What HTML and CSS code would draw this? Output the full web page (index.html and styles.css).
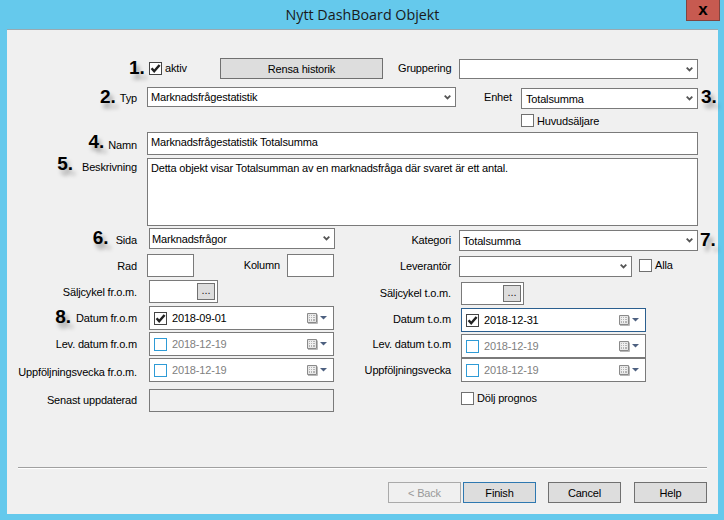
FILE: index.html
```html
<!DOCTYPE html>
<html lang="sv">
<head>
<meta charset="utf-8">
<title>Nytt DashBoard Objekt</title>
<link rel="stylesheet" href="styles.css">
</head>
<body>
<svg class="defs" width="0" height="0" aria-hidden="true">
  <symbol id="chev" viewBox="0 0 7 5"><path d="M.7.7 3.5 3.5 6.3.7" fill="none" stroke="#555" stroke-width="1.8"/></symbol>
  <symbol id="check" viewBox="0 0 11 11"><path d="M1.6 5.2 4.2 8.2 9.6 2" fill="none" stroke="#222" stroke-width="2.5"/></symbol>
  <symbol id="cal" viewBox="0 0 20 11">
    <path d="M.5.5h9v9h-9z" fill="#e6e6e6" stroke="#8a8a8a"/>
    <path d="M1 10.500h9.500v-9" fill="none" stroke="#b8b8b8"/>
    <path d="M2 2h6v6H2z" fill="#b4b4b4"/>
    <path d="M2 3.500h6M2 5.500h6M3.500 2v6M5.500 2v6" stroke="#f0f0f0"/>
    <path d="M13 3h7l-3.500 3.500z" fill="#4d6080"/>
  </symbol>
</svg>
<div class="window">
  <header class="titlebar">
    <h1 class="title">Nytt DashBoard Objekt</h1>
    <button class="close" type="button">x</button>
  </header>
  <main class="client">
    <div class="row r1">
      <div class="num n1">1.</div>
      <span class="cb on"><svg><use href="#check"/></svg></span>
      <span class="lbl aktiv">aktiv</span>
      <button class="btn rensa" type="button">Rensa historik</button>
      <span class="lbl grupp">Gruppering</span>
      <div class="sel grsel"><svg class="chev"><use href="#chev"/></svg></div>
    </div>
    <div class="row r2">
      <div class="lblcell w-typ"><span class="num">2.</span><span class="lbl typ">Typ</span></div>
      <div class="sel typsel"><span>Marknadsfrågestatistik</span><svg class="chev"><use href="#chev"/></svg></div>
      <span class="lbl enhet">Enhet</span>
      <div class="sel ensel"><span>Totalsumma</span><svg class="chev"><use href="#chev"/></svg></div>
      <span class="num n3">3.</span>
    </div>
    <div class="row r3">
      <span class="cb"></span><span class="lbl huvud">Huvudsäljare</span>
    </div>
    <div class="row r4">
      <div class="lblcell w-namn"><span class="num">4.</span><span class="lbl namn">Namn</span></div>
      <div class="txt namnbox">Marknadsfrågestatistik Totalsumma</div>
    </div>
    <div class="row r5">
      <div class="lblcell w-besk"><span class="num">5.</span><span class="lbl besk">Beskrivning</span></div>
      <div class="txt area">Detta objekt visar Totalsumman av en marknadsfråga där svaret är ett antal.</div>
    </div>
    <div class="cols">
      <section class="col left">
        <div class="row l-sida">
          <div class="lblcell lc"><span class="num">6.</span><span class="lbl sida">Sida</span></div>
          <div class="sel sidasel"><span>Marknadsfrågor</span><svg class="chev"><use href="#chev"/></svg></div>
        </div>
        <div class="row l-rad">
          <div class="lblcell lc2"><span class="lbl">Rad</span></div>
          <div class="box small"></div>
          <span class="lbl kol">Kolumn</span>
          <div class="box small"></div>
        </div>
        <div class="row l-salj">
          <div class="lblcell lc"><span class="lbl">Säljcykel fr.o.m.</span></div>
          <div class="box pick lp"><button class="dots" type="button">...</button></div>
        </div>
        <div class="row l-dat">
          <div class="lblcell lc"><span class="num">8.</span><span class="lbl dl">Datum fr.o.m</span></div>
          <div class="date"><span class="cb on"><svg><use href="#check"/></svg></span><span class="dv">2018-09-01</span><svg class="cal"><use href="#cal"/></svg></div>
        </div>
        <div class="row l-lev">
          <div class="lblcell lc"><span class="lbl">Lev. datum fr.o.m</span></div>
          <div class="date off"><span class="cb"></span><span class="dv">2018-12-19</span><svg class="cal"><use href="#cal"/></svg></div>
        </div>
        <div class="row l-upp">
          <div class="lblcell lc"><span class="lbl">Uppföljningsvecka fr.o.m.</span></div>
          <div class="date off"><span class="cb"></span><span class="dv">2018-12-19</span><svg class="cal"><use href="#cal"/></svg></div>
        </div>
        <div class="row l-sen">
          <div class="lblcell lc"><span class="lbl">Senast uppdaterad</span></div>
          <div class="box senast"></div>
        </div>
      </section>
      <section class="col right">
        <div class="row h-kat">
          <div class="lblcell rc"><span class="lbl">Kategori</span></div>
          <div class="sel katsel"><span>Totalsumma</span><svg class="chev"><use href="#chev"/></svg></div>
          <span class="num n7">7.</span>
        </div>
        <div class="row h-lev">
          <div class="lblcell rc"><span class="lbl">Leverantör</span></div>
          <div class="sel levsel"><svg class="chev"><use href="#chev"/></svg></div>
          <span class="cb alla"></span><span class="lbl allat">Alla</span>
        </div>
        <div class="row h-salj">
          <div class="lblcell rd"><span class="lbl">Säljcykel t.o.m.</span></div>
          <div class="box pick rp"><button class="dots" type="button">...</button></div>
        </div>
        <div class="row h-dat">
          <div class="lblcell rd"><span class="lbl">Datum t.o.m</span></div>
          <div class="date focus"><span class="cb on"><svg><use href="#check"/></svg></span><span class="dv">2018-12-31</span><svg class="cal"><use href="#cal"/></svg></div>
        </div>
        <div class="row h-lv">
          <div class="lblcell rd"><span class="lbl lv-l">Lev. datum t.o.m</span></div>
          <div class="date off"><span class="cb"></span><span class="dv">2018-12-19</span><svg class="cal"><use href="#cal"/></svg></div>
        </div>
        <div class="row h-up">
          <div class="lblcell rd"><span class="lbl up-l">Uppföljningsvecka</span></div>
          <div class="date off"><span class="cb"></span><span class="dv">2018-12-19</span><svg class="cal"><use href="#cal"/></svg></div>
        </div>
        <div class="row h-dolj">
          <span class="cb"></span><span class="lbl doljt">Dölj prognos</span>
        </div>
      </section>
    </div>
    <hr class="sep">
    <footer class="actions">
      <button class="btn wiz disabled" type="button">&lt; Back</button>
      <button class="btn wiz finish" type="button">Finish</button>
      <button class="btn wiz cancel" type="button">Cancel</button>
      <button class="btn wiz help" type="button">Help</button>
    </footer>
  </main>
</div>
</body>
</html>
```

FILE: styles.css
```css
* { box-sizing: border-box; }
html, body { margin: 0; padding: 0; }
body { width: 724px; height: 520px; overflow: hidden; font-family: "Liberation Sans", Arial, sans-serif; font-size: 11px; letter-spacing: -0.17px; color: #000; }
.defs { position: absolute; }
.window { width: 724px; height: 520px; background: #65c9ec; display: flex; flex-direction: column; padding: 0 6px 6px 7px; }
.titlebar { height: 29px; flex: none; display: flex; justify-content: center; position: relative; }
.title { margin: 0; font: 400 14.3px/30px "Open Sans", sans-serif; letter-spacing: 0; color: #1a1a1a; }
.close { position: absolute; right: -2px; top: 0; width: 34px; height: 21px; background: #c75a50; border: 1px solid #7f4540; border-top: 0; font: 700 17px/15px "Liberation Sans", sans-serif; color: #000; padding: 0 0 2px; }
.client { flex: 1; background: #f0f0f0; border-top: 1px solid #9aa9b0; padding: 28px 0 11px; display: flex; flex-direction: column; }
.row { display: flex; align-items: flex-start; }
.lbl { white-space: nowrap; line-height: 13px; }
.num { font: 700 19px/20px "Liberation Sans", sans-serif; letter-spacing: 0; color: #000; text-shadow: 3px 5px 4px rgba(0,0,0,.35); white-space: nowrap; }
.lblcell { display: flex; justify-content: flex-end; align-items: flex-start; flex: none; white-space: nowrap; }

.sel, .txt, .box, .date { background: #fff; border: 1px solid #7a7a7a; flex: none; }
.sel { display: flex; align-items: center; height: 21px; padding: 0 4px 0 3px; }
.chev { width: 7px; height: 5px; flex: none; margin-left: auto; }
.cb { width: 13px; height: 13px; border: 1px solid #707070; background: #fff; flex: none; display: block; }
.cb.on { border-color: #444; }
.cb svg { display: block; width: 11px; height: 11px; }
.btn { background: #dddddd; border: 1px solid #707070; font: 11px "Liberation Sans", sans-serif; letter-spacing: inherit; color: #000; padding: 0; }

.r1 { height: 29px; margin-left: 122px; }
.n1 { width: 20px; }
.r1 .cb { margin-top: 4px; }
.aktiv { margin: 4px 0 0 3px; width: 55px; }
.rensa { width: 163px; height: 21px; margin-right: 15px; }
.grupp { width: 53px; text-align: right; margin-top: 4px; }
.grsel { width: 239px; height: 20px; margin: 1px 0 0 8px; }

.r2 { height: 27px; }
.w-typ { width: 140px; padding-right: 10px; }
.typ { margin: 5px 0 0 4px; }
.typsel { width: 309px; height: 20px; margin-right: 28px; }
.enhet { width: 30px; margin: 4px 7px 0 0; }
.ensel { width: 177px; margin-top: 1px; padding-left: 4px; }
.n3 { margin-left: 3px; }

.r3 { height: 18px; margin-left: 514px; }
.huvud { margin: 1px 0 0 3px; }

.r4 { height: 26px; }
.w-namn { width: 133px; }
.w-namn .num { margin-right: 4px; }
.namn { margin: 7px 3px 0 0; }
.txt { padding: 2px 3px; line-height: 14px; white-space: nowrap; }
.namnbox { width: 551px; height: 23px; margin-left: 7px; }

.r5 { height: 70px; }
.w-besk { width: 133px; }
.w-besk .num { margin-top: -4px; margin-right: 9px; }
.besk { margin: 3px 3px 0 0; }
.area { width: 551px; height: 68px; margin-left: 7px; }

.cols { display: flex; align-items: flex-start; }
.left { width: 327px; flex: none; }
.right { width: 360px; flex: none; padding-top: 2px; }
.lc { width: 135px; }
.lc2 { width: 133px; }
.lc .lbl { margin-right: 5px; }
.lc2 .lbl { margin-right: 3px; }

.l-sida, .l-rad, .l-salj, .l-dat, .l-lev, .h-kat, .h-lev, .h-salj, .h-dat { height: 26px; }
.h-lv { height: 24px; }
.l-upp { height: 31px; }
.h-up { height: 34px; }
.l-sida .num { margin-right: 7px; }
.sidasel { width: 186px; margin-left: 7px; padding-left: 2px; }
.sida { margin-top: 6px; }
.l-rad .lc2 .lbl { margin-top: 6px; }
.small { width: 47px; height: 23px; margin-left: 7px; }
.kol { width: 86px; text-align: right; margin: 5px 0 0 0; }
.l-salj .lbl, .l-dat .dl, .l-lev .lbl { margin-top: 6px; }
.l-dat .num { margin: 1px 5px 0 0; }
.l-upp .lbl { margin-top: 8px; }
.l-sen .lbl { margin-top: 5px; }

.pick { height: 23px; padding: 2px; display: flex; justify-content: flex-end; }
.lp { width: 69px; margin-left: 7px; }
.rp { width: 63px; margin-left: 7px; }
.dots { width: 18px; height: 17px; font: 11px/10px "Liberation Sans", sans-serif; padding: 0 0 4px; color: #222; background: #dddddd; border: 1px solid #707070; }
.date { width: 185px; height: 24px; display: flex; align-items: center; padding: 0 6px 0 4px; margin-left: 7px; }
.dv { margin-left: 5px; color: #000; }
.date .cal { width: 20px; height: 11px; margin-left: auto; }
.date.off .cb { border-color: #2e9bd6; }
.date.off .dv { color: #808080; }
.date.focus { border-color: #2b5f8f; }
.senast { width: 185px; height: 23px; margin-left: 7px; background: #f0f0f0; }

.rc { width: 118px; }
.rc .lbl { margin: 4px 1px 0 0; }
.katsel { width: 239px; margin-left: 7px; }
.levsel { width: 173px; margin-left: 7px; padding-right: 4px; }
.rd { width: 120px; }
.rd .lbl { margin: 5px 3px 0 0; }
.rd .lv-l { margin-top: 4px; }
.rd .up-l { margin-top: 6px; }
.n7 { margin-left: 2px; }
.alla { margin: 3px 0 0 7px; }
.allat { margin: 3px 0 0 3px; }
.h-dolj { margin-left: 127px; }
.doljt { margin-left: 3px; }

.sep { flex: none; margin: auto 0 13px 11px; width: 689px; height: 2px; border: 0; background: linear-gradient(#a0a0a0 50%, #fff 50%); }
.actions { flex: none; margin-left: 381px; display: flex; }
.wiz { width: 73px; height: 21px; }
.disabled { color: #999; border-color: #aaa; background: #f0f0f0; margin-right: 2px; }
.finish { border-color: #2e78b0; margin-right: 12px; }
.cancel { margin-right: 13px; }
```
